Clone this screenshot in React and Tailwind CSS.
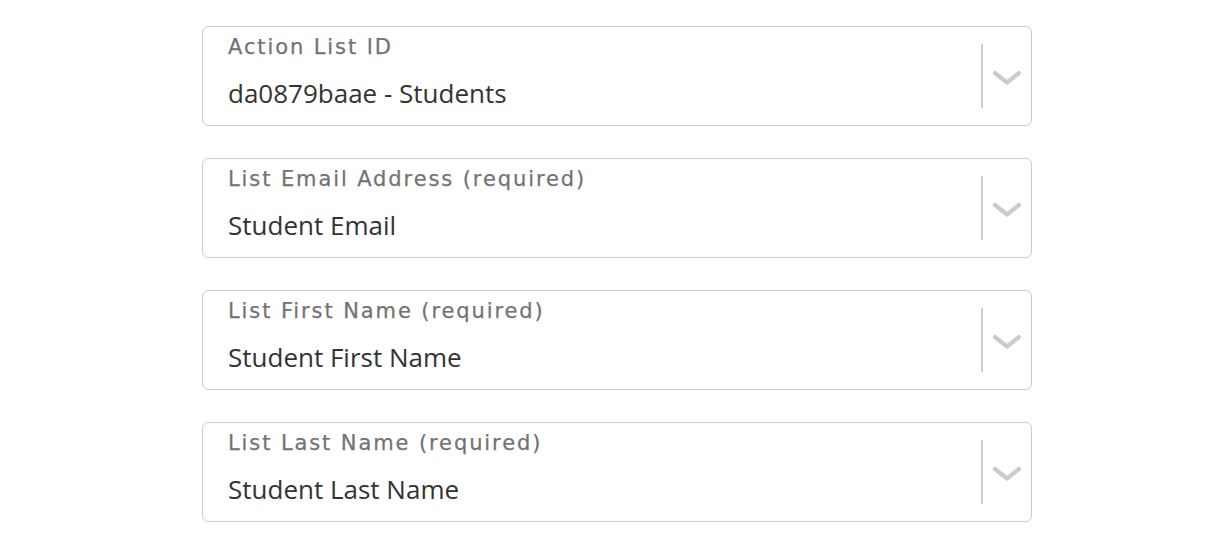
const fields = [
  { label: 'Action List ID', value: 'da0879baae - Students' },
  { label: 'List Email Address (required)', value: 'Student Email' },
  { label: 'List First Name (required)', value: 'Student First Name' },
  { label: 'List Last Name (required)', value: 'Student Last Name' },
];

function Chevron() {
  return (
    <svg width="30" height="16" viewBox="0 0 30 16" fill="none">
      <polyline points="3,3 15,12.5 27,3" stroke="#cccccc" strokeWidth="4.2" strokeLinecap="round" strokeLinejoin="round" />
    </svg>
  );
}

function SelectField({ label, value }) {
  return (
    <div className="flex h-[100px] items-center rounded-[6px] border border-[#cccccc] bg-white">
      <div className="flex flex-1 flex-col self-stretch pl-[25px] pt-[6px]">
        <span className="text-[21px] leading-[28px] tracking-[1.9px] text-[#737373] [font-family:'DejaVu_Sans',sans-serif] [-webkit-text-stroke:0.25px_#737373]">
          {label}
        </span>
        <span className="mt-[15px] text-[26px] leading-[34px] text-[#333333] [font-family:'Open_Sans',sans-serif]">
          {value}
        </span>
      </div>
      <div className="h-[64px] w-[2px] bg-[#cccccc]" />
      <div className="flex w-[48px] items-center justify-center pt-[3px]">
        <Chevron />
      </div>
    </div>
  );
}

export default function App() {
  return (
    <div className="min-h-[540px] bg-white pt-[26px]">
      <div className="ml-[202px] flex w-[830px] flex-col gap-[32px]">
        {fields.map((f) => (
          <SelectField key={f.label} label={f.label} value={f.value} />
        ))}
      </div>
    </div>
  );
}
